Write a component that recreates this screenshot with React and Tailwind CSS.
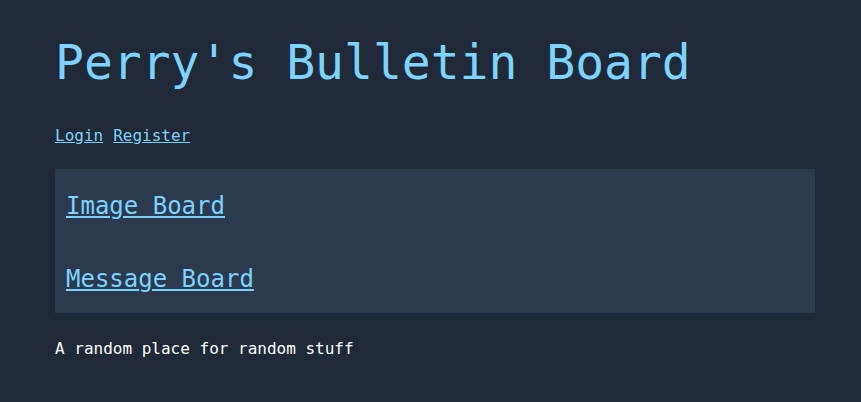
export default function App() {
  return (
    <div className="min-h-[402px] bg-[#1f2937] px-[55px] pt-[30px] font-['DejaVu_Sans_Mono',monospace] text-white">
      <h1 className="text-[48px] leading-[64px] text-[#7dd3fc]">Perry's Bulletin Board</h1>
      <nav className="mt-[30px] flex gap-[10px] text-[16px] leading-[24px]">
        <a href="#" className="text-[#7dd3fc] underline">Login</a>
        <a href="#" className="text-[#7dd3fc] underline">Register</a>
      </nav>
      <div className="mt-[21px] w-[760px] bg-[#2b3a4f] px-[11px] pt-[19px] pb-[16px]">
        <div className="flex flex-col gap-[37px] text-[24px] leading-[36px]">
          <a href="#" className="self-start text-[#7dd3fc] underline">Image Board</a>
          <a href="#" className="self-start text-[#7dd3fc] underline">Message Board</a>
        </div>
      </div>
      <p className="mt-[24px] text-[16px] leading-[24px]">A random place for random stuff</p>
    </div>
  );
}
